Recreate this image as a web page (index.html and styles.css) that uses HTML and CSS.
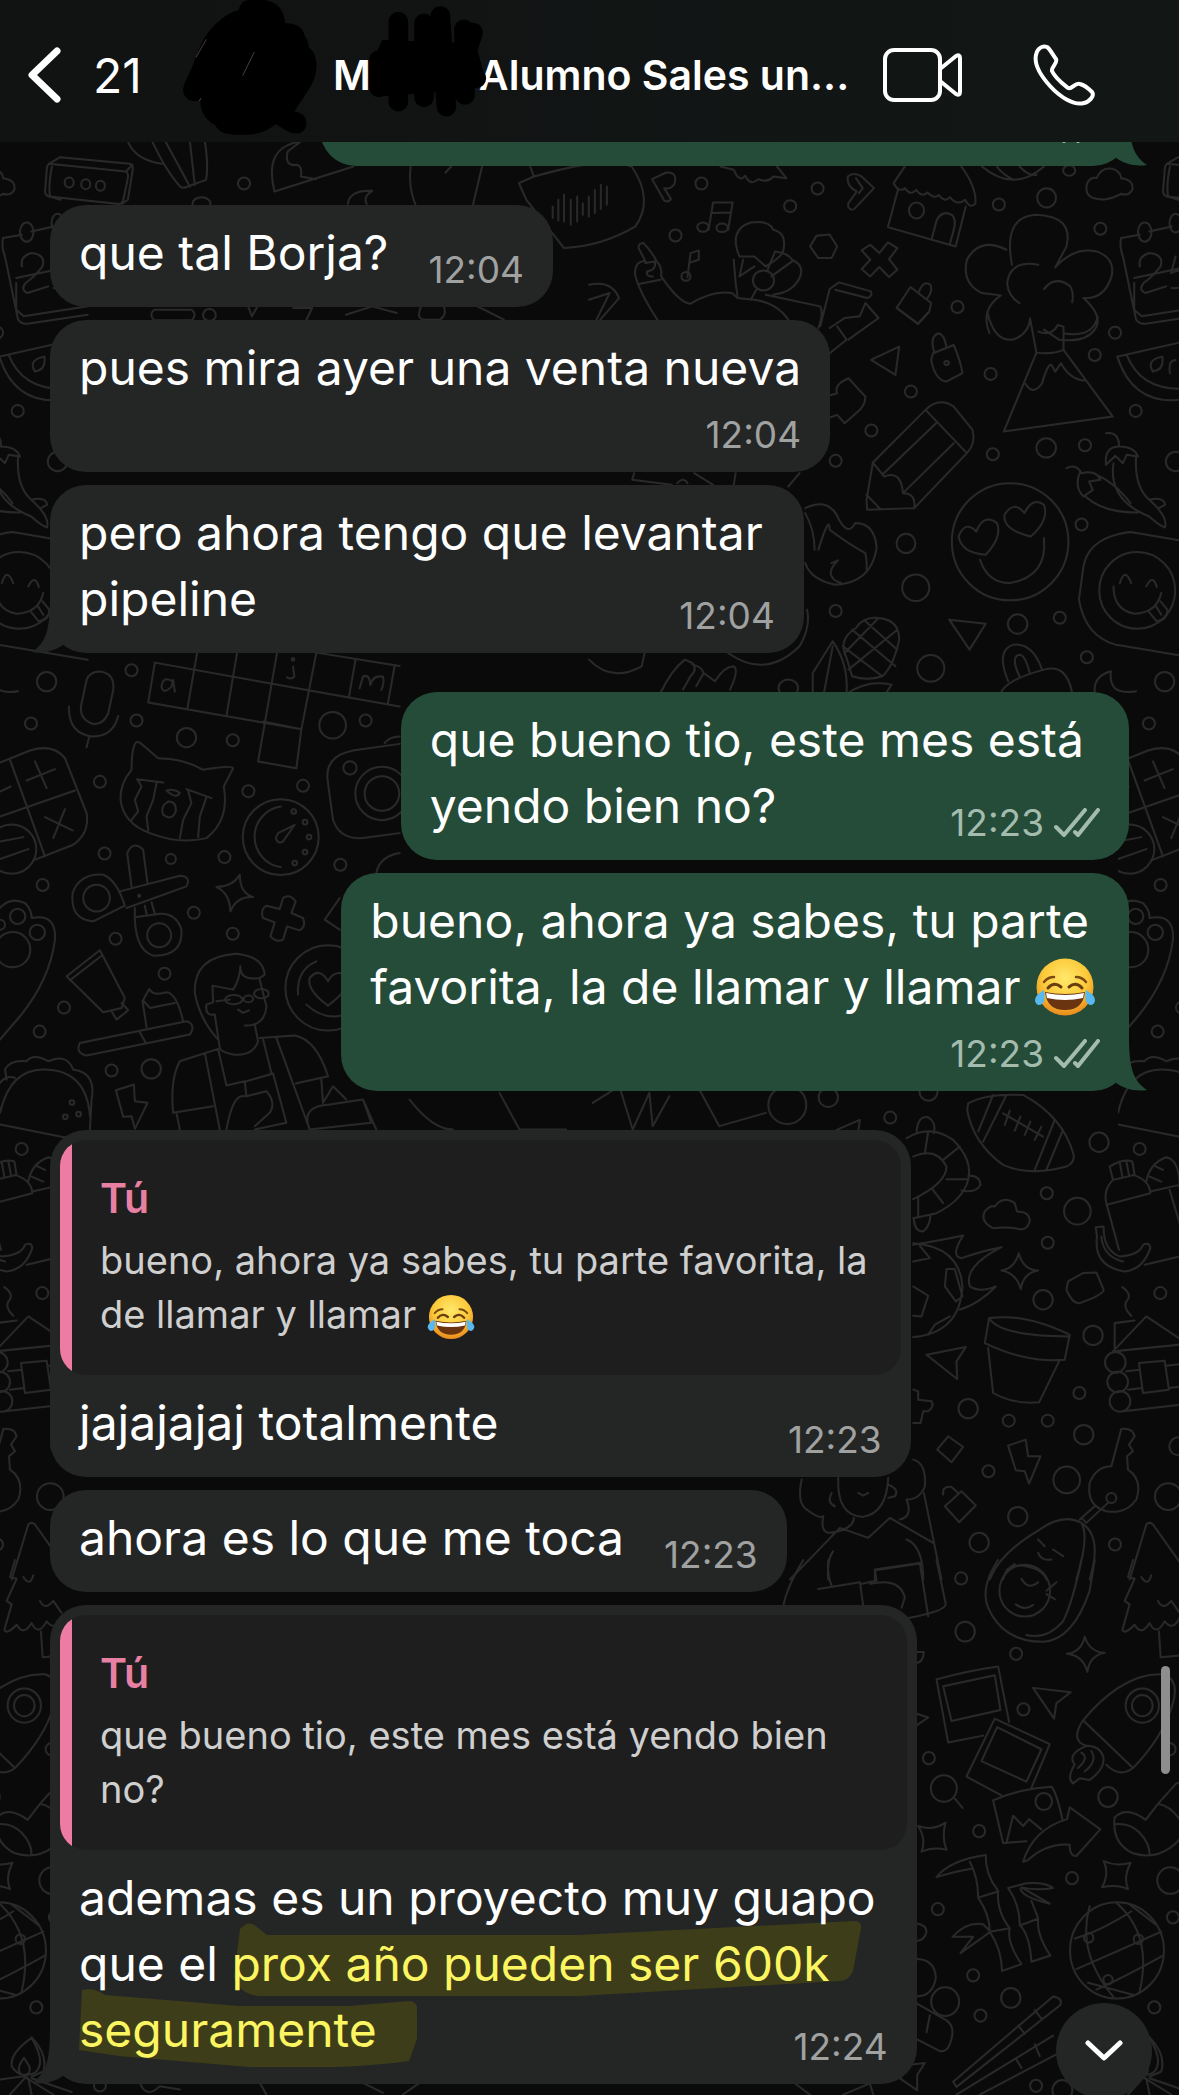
FILE: index.html
```html
<!DOCTYPE html>
<html lang="es">
<head>
<meta charset="utf-8">
<meta name="viewport" content="width=device-width, initial-scale=1">
<title>Chat</title>
<link rel="stylesheet" href="styles.css">
</head>
<body>
<svg class="sprites" aria-hidden="true">
  <defs>
    <radialGradient id="face" cx=".5" cy=".35" r=".65">
      <stop offset="0" stop-color="#ffe86b"/><stop offset=".6" stop-color="#fcc93a"/><stop offset="1" stop-color="#e88a1c"/>
    </radialGradient>
    <symbol id="joy" viewBox="0 0 62 58">
      <circle cx="31" cy="29" r="28.500" fill="url(#face)"/>
      <path d="M10 24Q14 19 20 19M42 19Q48 19 52 24" fill="none" stroke="#7a4a12" stroke-width="2.500" stroke-linecap="round"/>
      <path d="M14 30Q20 23 27 29M35 29Q42 23 48 30" fill="none" stroke="#6b3d0e" stroke-width="3" stroke-linecap="round"/>
      <path d="M11 34Q31 38 51 34Q49 52 31 52Q13 52 11 34Z" fill="#6b3410"/>
      <path d="M12 35Q31 39 50 35L49 40Q31 44 13 40Z" fill="#fff"/>
      <path d="M10 32Q0 38 1 43Q3 49 8 46Q12 43 10 32ZM52 32Q62 38 61 43Q59 49 54 46Q50 43 52 32Z" fill="#58b8f0"/>
    </symbol>
    <symbol id="checks" viewBox="0 0 46 30">
      <path d="M2 19L10 27L31 2M21 24L24 27L44 2" fill="none" stroke="currentColor" stroke-width="4" stroke-linecap="round" stroke-linejoin="round"/>
    </symbol>
    <symbol id="tail" viewBox="0 0 46 54">
      <path d="M18 0C18 30 14 44 0 53C14 55 23 51 31 46L46 22V0Z" fill="currentColor"/>
    </symbol>
  </defs>
</svg>

<header class="topbar">
  <button class="back" type="button" aria-label="Volver, 21 chats sin leer">
    <svg width="33" height="56" viewBox="0 0 33 56" aria-hidden="true"><path d="M29 4L4 28L29 52" fill="none" stroke="currentColor" stroke-width="7" stroke-linecap="round" stroke-linejoin="round"/></svg>
    <span>21</span>
  </button>
  <svg class="avatar" viewBox="38 0 402 426" preserveAspectRatio="none" aria-hidden="true">
    <path d="M205 30C210 5 230-10 285 0C320 8 340 25 345 70C375 68 400 85 402 105C412 120 415 130 415 142C440 160 445 200 430 240C420 265 400 290 372 335C400 335 415 360 405 385C395 405 370 405 345 390L315 372C290 395 260 405 215 404C180 405 145 402 135 375C110 365 88 335 90 300C70 310 40 300 38 270C40 245 65 210 75 175C90 140 100 110 120 90C140 65 170 40 205 30Z"/>
    <path d="M77 172L108 118M217 227L252 156M87 303L92 294" stroke="#6a6058" stroke-width="2"/>
  </svg>
  <h1 class="title"><span>M</span><svg class="title-cover" viewBox="594 12 360 426" aria-hidden="true">
      <path d="M640 120L920 130L948 235L890 270L620 290L600 240L612 180Z"/>
      <path d="M688 65V305M765 70V292M814 48L832 320M885 88L888 285M912 98L895 150M630 180V262M880 235H922" fill="none" stroke="#000" stroke-width="59" stroke-linecap="round"/>
    </svg><span class="title-text">Alumno Sales un...</span></h1>
  <div class="actions">
    <button type="button" aria-label="Videollamada"><svg width="80" height="54" viewBox="0 0 80 54" aria-hidden="true"><g fill="none" stroke="currentColor" stroke-width="4" stroke-linejoin="round"><rect x="2" y="2" width="55" height="50" rx="9"/><path d="M57 21L73 8Q77 6 77 10V44Q77 48 73 46L57 33"/></g></svg></button>
    <button type="button" aria-label="Llamar"><svg width="62" height="62" viewBox="0 0 62 62" aria-hidden="true"><path d="M3 11C4 5 9 1 14 3C17 5 20 11 23 15C25 19 18 23 19 27C22 34 30 40 35 44C39 46 42 38 47 40C51 41 56 45 59 48C62 52 56 58 51 59C41 62 27 53 17 42C8 32 1 20 3 11Z" fill="none" stroke="currentColor" stroke-width="4" stroke-linejoin="round"/></svg></button>
  </div>
</header>

<main class="chat">
  <svg class="wallpaper" aria-hidden="true">
    <defs>
      <g id="doodles">
        <!-- upper left: cassette, wings, fish -->
        <g transform="scale(.376 .333)">
          <path d="M130 492L335 515Q342 520 340 535L328 600Q325 615 310 612L130 590Q118 585 120 570L125 500ZM130 492L160 472L345 492Q355 495 353 510L340 600L325 612M335 515L352 495"/>
          <ellipse cx="184" cy="548" rx="12" ry="15"/><ellipse cx="228" cy="553" rx="12" ry="15"/><ellipse cx="267" cy="558" rx="12" ry="15"/>
          <path d="M340 425Q360 480 430 492M405 425Q440 510 475 555Q485 570 500 560L548 540Q555 500 545 425M440 425L505 560M505 425L518 555"/>
          <path d="M730 575Q700 440 800 425M730 575L940 500M800 425L765 455Q755 500 790 495Q805 500 800 530L840 538M925 612Q930 570 990 573Q965 590 975 612"/>
          <ellipse cx="649" cy="551" rx="16" ry="18"/><ellipse cx="536" cy="612" rx="24" ry="20"/>
          <path d="M1092 500Q1085 560 1105 615M1282 500L1258 615M1185 518L1200 500M1410 500L1420 530L1490 510M1380 550L1420 530Q1600 470 1680 500Q1740 600 1690 680Q1600 740 1500 745L1400 600Z"/>
          <path d="M1470 620V655M1485 600V662M1500 585V665M1518 600V675M1535 590V665M1550 610V645M1566 590V650M1582 570V640M1598 555V628M1614 560V615"/>
          <path d="M410 930H510Q525 945 510 962H410Q395 945 410 930M660 920L670 950L685 920M780 925H830L815 960M920 945L990 920L1055 940M1120 920Q1105 960 1130 960H1170Q1190 945 1180 920M1270 920L1340 960"/>
          <ellipse cx="557" cy="946" rx="17" ry="18"/>
        </g>
        <!-- upper right: music, shop, volcano cloud -->
        <g transform="translate(589) scale(.376 .333)">
          <path d="M168 538L205 518Q235 515 228 550Q220 570 200 565L218 598Q210 610 200 602ZM700 630Q685 625 690 610L712 575Q685 560 688 530Q705 515 725 530L758 565L705 628M710 535L728 565L718 580"/>
          <path d="M318 690L330 608H382L370 690M328 640L378 638M262 832L270 760L292 752V780L270 788"/>
          <ellipse cx="303" cy="682" rx="15" ry="14"/><ellipse cx="354" cy="684" rx="15" ry="13"/><ellipse cx="258" cy="830" rx="12" ry="13"/>
          <path d="M350 500L385 510Q400 550 415 528Q430 560 450 538Q475 550 490 530L525 535L500 500"/>
          <path d="M840 500L810 550Q825 580 840 565Q855 590 870 570Q885 595 900 578Q920 600 930 585Q945 610 960 592Q980 620 1000 600Q1015 630 1028 610Q1030 560 990 500M822 568L795 682L975 740L1002 620M912 715L925 660Q940 630 965 645Q978 660 970 690L960 732"/>
          <ellipse cx="871" cy="632" rx="20" ry="24"/><path d="M1045 500Q1130 580 1210 500M1085 500Q1100 525 1130 540M1145 500Q1170 530 1190 525"/>
          <path d="M1350 597Q1315 590 1325 550Q1335 530 1350 535Q1365 495 1400 510Q1415 520 1415 535Q1450 540 1445 570Q1435 590 1415 582Q1380 605 1350 597Z"/>
          <path d="M1545 500Q1535 560 1540 590L1568 600M605 708L640 704L660 740L645 775H610L588 740ZM748 735L772 760L795 728L820 745L798 778L820 810L798 832L772 802L748 830L725 808L748 780L725 752Z"/>
          <path d="M1125 795Q1100 650 1190 645Q1290 650 1270 740L1240 803Q1290 740 1350 755Q1400 775 1390 830Q1370 900 1315 895Q1370 950 1345 990Q1320 1030 1250 1020L1210 990M1110 750Q1040 710 1005 780Q990 850 1045 880L1095 887Q1040 930 1065 1000M1195 795Q1120 780 1112 850Q1115 890 1145 910M1210 868Q1240 825 1280 860Q1290 880 1285 908"/>
          <path d="M1465 705L1415 715Q1410 740 1420 770L1455 960Q1465 975 1480 972L1640 945M1490 695L1550 680M1450 850V930L1470 950L1640 920M1450 835L1640 790"/>
          <ellipse cx="1478" cy="697" rx="18" ry="29"/><ellipse cx="1560" cy="670" rx="16" ry="28"/>
          <path d="M1465 800Q1460 770 1490 760Q1530 765 1520 800Q1500 830 1475 850Q1460 870 1480 880L1535 860M1560 770L1548 820Q1580 800 1590 830Q1590 870 1550 865"/>
          <path d="M182 960Q130 870 122 820Q125 780 150 785L132 745Q130 730 145 730Q170 760 180 785Q195 800 192 830Q240 910 270 912Q330 870 380 880L395 895L440 900Q500 910 530 960M135 852L190 840M150 790L175 785Q180 810 155 815Q150 830 170 830"/>
          <path d="M400 770Q370 690 430 668Q480 660 490 690Q530 700 515 760Q500 780 470 800L440 770ZM385 780L390 850L395 890M410 780L400 830L440 800M495 755Q530 760 540 780Q580 800 555 845Q535 880 490 885M495 755L475 810M540 785L485 830M430 900L445 870"/>
          <ellipse cx="464" cy="842" rx="28" ry="30"/>
          <path d="M470 885L615 920Q625 940 610 985M640 868L615 980M640 868L665 848L750 875Q755 890 740 895L655 870M735 910L770 955L690 1020M640 985L680 955L720 950L735 910M660 980L685 1020L630 1070"/>
          <path d="M855 862L910 910L905 935L875 972L818 925ZM878 875Q890 840 908 855Q915 875 900 895M0 855Q60 840 80 895L30 960M0 900L55 880L20 960"/>
          <ellipse cx="299" cy="551" rx="16" ry="18"/><ellipse cx="608" cy="566" rx="16" ry="18"/><ellipse cx="535" cy="619" rx="16" ry="18"/><ellipse cx="230" cy="707" rx="16" ry="18"/><ellipse cx="1090" cy="614" rx="16" ry="18"/><ellipse cx="1217" cy="594" rx="25" ry="29"/><ellipse cx="1360" cy="687" rx="16" ry="18"/><ellipse cx="980" cy="922" rx="16" ry="18"/><ellipse cx="1277" cy="512" rx="16" ry="16"/>
        </g>
        <!-- right: volcano, pencil, chillies, smileys, corn -->
        <g transform="translate(589 300) scale(.376 .333)">
          <path d="M1060 40Q1080 130 1130 118Q1170 100 1173 55L1190 158Q1230 165 1262 150V80L1247 75Q1230 110 1195 95M1262 100Q1340 115 1353 50M1190 158L1103 395L1393 350L1262 150M1160 250Q1180 290 1205 250Q1220 190 1230 195L1240 215L1255 190Q1280 240 1320 242"/>
          <path d="M820 25L875 72L905 35M825 140L750 180L815 225ZM915 160L970 135Q990 190 993 220L950 245Q920 240 910 180ZM918 155Q905 110 930 100Q945 105 950 138"/>
          <circle cx="951" cy="189" r="6"/>
          <path d="M630 290L660 280Q650 255 690 235L735 290Q735 320 710 340L680 370L660 345L635 355"/>
          <path d="M755 488L895 330Q930 290 970 320L1020 390Q1030 430 1005 460L865 625L740 630L738 600ZM895 330L1005 460M925 368L780 525M970 430L835 580M755 488L785 530Q830 510 835 580Q870 580 865 625M738 585L775 628"/>
          <path d="M1405 170L1640 110M1405 170Q1450 330 1600 295M1430 165Q1470 280 1600 265M1500 215Q1480 180 1525 170Q1530 210 1500 215M1545 220Q1540 180 1560 180"/>
          <path d="M1375 400Q1410 395 1410 440M1375 495Q1370 440 1410 440Q1450 440 1460 470L1430 465L1420 490L1400 468ZM1395 490Q1380 600 1490 650Q1520 680 1532 683Q1540 650 1490 600Q1450 560 1455 470M1270 505Q1295 490 1310 520Q1350 510 1360 540L1330 545L1340 570L1315 590Q1290 560 1305 520M1320 590Q1370 640 1460 638M1350 525Q1400 550 1440 610M1490 600Q1530 590 1532 615L1515 625"/>
          <ellipse cx="1120" cy="726" rx="155" ry="176"/><path d="M1055 765Q990 760 983 710Q1000 660 1030 695Q1050 640 1085 670Q1100 710 1055 765ZM1175 710Q1100 690 1105 645Q1130 600 1158 640Q1180 590 1210 615Q1225 660 1175 710ZM1040 780Q1060 850 1120 850Q1220 830 1210 715"/>
          <path d="M1640 735L1440 697Q1330 710 1315 800L1303 900Q1320 1010 1400 1035L1640 1080"/><ellipse cx="1458" cy="872" rx="101" ry="115"/><path d="M1412 850Q1425 800 1442 850M1482 860Q1500 820 1510 862M1395 860Q1395 930 1450 942Q1510 940 1522 880M1488 935L1510 965Q1540 960 1538 930L1520 905M1508 920L1522 945"/>
          <path d="M575 625Q640 590 665 660Q690 710 708 670Q760 670 765 745Q750 850 655 855Q590 840 575 790M600 750Q600 690 575 640M610 750Q640 640 640 690Q700 740 735 760Q740 790 738 808M645 790L662 782Q620 830 670 850"/>
          <path d="M685 1075Q660 1020 710 985Q730 950 770 955Q825 960 825 1020Q810 1100 780 1130Q740 1145 700 1130ZM700 990L815 1100M735 965L820 1050M675 1040L780 1130M820 990L690 1110M770 955L680 1060M648 1025L595 1120V1180M648 1025Q690 1090 685 1180M648 1040L625 1180M690 1180Q740 1140 805 1155L790 1180"/>
          <path d="M958 960L1055 972L1012 1050ZM1115 1145Q1080 1050 1130 1035Q1180 1030 1205 1110M1145 1130Q1120 1070 1145 1065Q1160 1065 1172 1120M1095 1180Q1110 1140 1210 1110Q1270 1090 1285 1180M1345 1180Q1340 1130 1388 1115Q1380 1190 1455 1175"/>
          <path d="M190 1180Q220 1110 255 1080L275 1090Q290 1110 270 1130L250 1170M275 1095Q300 1100 305 1120L285 1160M305 1120L335 1145Q360 1100 385 1100Q400 1110 375 1170M0 1080Q60 1150 140 1100L148 1060M370 1060Q470 1140 560 1040Q590 980 580 930M120 520L115 540L220 555M235 550Q250 530 262 550M280 520L330 555M390 520L385 555M560 520L530 560"/>
          <ellipse cx="1399" cy="98" rx="16" ry="18"/><ellipse cx="1345" cy="165" rx="16" ry="18"/><ellipse cx="1068" cy="222" rx="16" ry="18"/><ellipse cx="856" cy="275" rx="16" ry="18"/><ellipse cx="1454" cy="333" rx="16" ry="18"/><ellipse cx="751" cy="392" rx="16" ry="18"/><ellipse cx="656" cy="483" rx="16" ry="18"/><ellipse cx="1074" cy="463" rx="16" ry="18"/><ellipse cx="1216" cy="444" rx="26" ry="29"/><ellipse cx="1319" cy="436" rx="16" ry="18"/><ellipse cx="1310" cy="674" rx="16" ry="18"/><ellipse cx="843" cy="731" rx="25" ry="29"/><ellipse cx="869" cy="864" rx="36" ry="40"/><ellipse cx="656" cy="934" rx="16" ry="18"/><ellipse cx="1140" cy="973" rx="26" ry="29"/><ellipse cx="1252" cy="954" rx="16" ry="18"/><ellipse cx="909" cy="1106" rx="36" ry="40"/><ellipse cx="1324" cy="1073" rx="16" ry="18"/><ellipse cx="530" cy="1165" rx="26" ry="25"/><ellipse cx="1560" cy="485" rx="26" ry="29"/>
        </g>
        <!-- left: crossword, cat, scissors, reader -->
        <g transform="translate(0 620) scale(.333)">
          <path d="M465 128L445 248L905 328L890 445L775 425L832 98M465 128L930 212L1200 260M592 98L563 265M712 98L680 288M950 98L905 328M950 98L1200 138M1068 118L1048 230M1185 138L1165 250M790 305L905 328M520 185Q490 165 485 200Q490 225 515 200L520 180L525 215M880 140L884 170Q875 180 862 172M1080 205L1090 170Q1110 160 1112 195Q1120 165 1150 170Q1155 190 1145 210"/>
          <circle cx="880" cy="118" r="4"/>
          <path d="M300 155Q345 160 340 210L325 280Q310 315 280 312Q240 300 243 260L260 180Q270 155 300 155ZM207 260Q205 340 275 350Q340 350 355 288M268 350L260 382"/>
          <path d="M0 428L90 392Q160 370 195 415L260 580Q270 640 220 675L100 722M30 420L135 710M0 590L225 512M105 425L140 505M80 482L165 448M160 655L195 568M135 592L218 632M0 515L32 500M0 665L70 652M0 718L85 688"/><circle cx="35" cy="688" r="74"/>
          <path d="M410 366Q395 380 395 450Q360 490 362 540Q370 610 450 640Q540 675 620 655Q690 600 672 500L700 445Q695 435 610 450Q550 415 475 415L420 368ZM412 478L490 488M412 478L425 500L405 540L415 575L395 600M470 490L460 540L440 590L445 632M560 508L635 535M565 512L575 550L550 600L540 655M620 532L600 590L595 652M500 512Q520 505 540 518Q530 540 500 512M505 545Q530 545 528 575Q515 605 490 585Q480 560 505 545"/>
          <circle cx="843" cy="652" r="114"/><path d="M843 560A92 92 0 0 0 843 742M885 615L850 665Q835 675 828 655L835 640Z"/><circle cx="882" cy="575" r="7"/><circle cx="916" cy="607" r="7"/><circle cx="928" cy="652" r="7"/><circle cx="916" cy="697" r="7"/><circle cx="885" cy="730" r="7"/>
          <path d="M1200 372L1060 392Q970 410 985 490L1000 600Q1020 660 1090 655L1200 640M1155 370Q1170 350 1200 350M1130 760Q1140 710 1200 700"/><circle cx="1147" cy="521" r="80"/><circle cx="1147" cy="521" r="52"/>
          <path d="M360 815L540 768Q575 770 560 800L380 865M395 800L382 700Q400 660 430 690L443 792M375 858L280 905Q210 900 218 820Q240 760 310 765Q350 780 375 858M405 865Q400 990 460 1008Q550 1010 545 930Q530 880 480 882L410 892M440 882L435 858M465 882L455 848"/><circle cx="290" cy="835" r="40"/><circle cx="478" cy="947" r="36"/><circle cx="418" cy="828" r="3"/>
          <path d="M650 802Q700 800 720 765Q720 820 760 832Q710 830 692 875Q690 820 650 802ZM850 835Q870 820 888 845L875 880L910 895Q920 920 900 932L862 920L850 960Q830 970 812 950L825 908L790 895Q780 870 800 858L840 868Z"/>
          <path d="M200 1070L300 992L375 1135L365 1165L310 1178ZM210 1082L305 1008M365 1150L385 1172L350 1200L335 1175M440 1222L428 1145L448 1108Q460 1130 500 1118Q530 1120 550 1205M432 1145L450 1165L525 1150M240 1270L560 1205Q590 1215 570 1245L260 1308Q225 1300 240 1270M420 1238L438 1270"/>
          <path d="M660 1285L645 1185Q615 1190 620 1155L640 1148L638 1098L700 1110Q720 1080 722 1040Q720 1085 780 1075L795 1065Q790 1010 710 1002Q580 1010 585 1120Q600 1200 655 1260M780 1080L800 1160Q795 1220 735 1218M765 1215L775 1265Q760 1310 700 1305Q660 1295 660 1285M650 1145L690 1140M715 1170L730 1180L748 1172"/><ellipse cx="702" cy="1140" rx="26" ry="14"/><ellipse cx="785" cy="1122" rx="22" ry="14"/><ellipse cx="746" cy="1138" rx="14" ry="10"/>
          <path d="M655 1288L540 1325Q510 1380 520 1480L640 1460M615 1300L660 1530M655 1288L680 1398L735 1385M780 1255L885 1248Q950 1260 985 1370L888 1392M790 1260L815 1360M830 1255L930 1530M530 1480L540 1530M740 1385L820 1362L860 1510L765 1530M735 1385L740 1430L800 1415Q830 1450 810 1480L765 1520M680 1530Q700 1420 735 1430M965 1380L970 1450L1000 1400L1040 1440M930 1530Q900 1460 990 1455L1090 1440L1115 1510L930 1530M1090 1440L1130 1530"/>
          <circle cx="985" cy="1105" r="128"/><path d="M895 1125Q890 1050 950 1025M920 1155Q980 1210 1050 1180M985 1158Q920 1110 930 1075Q960 1040 985 1085Q1005 1045 1050 1070Q1050 1110 985 1158M1020 835L975 900L1020 930"/>
          <path d="M0 865Q30 830 75 850Q95 870 95 895Q170 880 165 960Q150 1080 60 1190L0 1260"/><circle cx="53" cy="890" r="23"/><circle cx="112" cy="938" r="23"/><circle cx="38" cy="990" r="53"/><circle cx="0" cy="915" r="15"/>
          <path d="M15 1350Q30 1320 80 1325Q100 1300 145 1325Q200 1300 220 1350Q290 1360 275 1440L270 1530M15 1350L20 1380M0 1480Q30 1350 130 1350Q260 1350 270 1490M0 1390Q20 1365 45 1375M0 1515L200 1555"/><circle cx="216" cy="1449" r="7"/><circle cx="236" cy="1484" r="7"/><circle cx="196" cy="1492" r="7"/>
          <path d="M348 1412L402 1395L405 1445L443 1450L405 1528L395 1490L370 1492Z"/>
          <circle cx="140" cy="185" r="29"/><circle cx="395" cy="151" r="18"/><circle cx="93" cy="311" r="18"/><circle cx="410" cy="302" r="18"/><circle cx="560" cy="353" r="29"/><circle cx="699" cy="361" r="18"/><circle cx="999" cy="316" r="40"/><circle cx="1098" cy="302" r="18"/><circle cx="1051" cy="444" r="20"/><circle cx="300" cy="486" r="18"/><circle cx="746" cy="514" r="18"/><circle cx="910" cy="498" r="18"/><circle cx="314" cy="701" r="18"/><circle cx="513" cy="718" r="15"/><circle cx="674" cy="712" r="18"/><circle cx="1022" cy="735" r="18"/><circle cx="128" cy="796" r="18"/><circle cx="582" cy="879" r="18"/><circle cx="347" cy="957" r="18"/><circle cx="699" cy="942" r="18"/><circle cx="494" cy="1062" r="18"/><circle cx="192" cy="1164" r="18"/><circle cx="119" cy="1236" r="18"/><circle cx="335" cy="1353" r="18"/><circle cx="454" cy="1348" r="29"/>
          <path d="M1230 1440Q1300 1530 1360 1530M1500 1420L1560 1530H1700M1780 1450L1860 1400L1900 1530L1950 1420L1960 1520L2010 1430M2100 1410L2160 1520L2300 1480"/>
        </g>
        <!-- right: football, lifebuoy, bottle, plant pot, cabin, key -->
        <g transform="translate(780 1060) scale(.333)">
          <path d="M565 130Q620 100 730 105Q850 170 882 285Q885 310 860 320Q750 350 670 315Q580 250 562 150ZM640 105L595 215M680 105L610 245M825 180L765 330M850 210L800 330M670 160L790 230M690 152L675 195M722 170L705 212M752 185L735 225M785 200L765 240"/>
          <path d="M380 235Q450 190 520 240Q580 300 565 360Q550 420 470 460L400 475M400 290Q470 260 500 320Q500 370 400 418M445 215L435 280M540 260L490 300M565 358L500 358M490 430L455 385M415 470V410M410 215Q415 165 445 172Q470 185 462 220M565 348Q600 345 602 375Q590 400 545 392M402 480Q405 515 430 515Q450 500 452 465"/>
          <path d="M640 505Q600 485 615 455Q630 435 645 440Q670 405 705 430L712 455Q750 455 750 485Q740 515 715 507Q680 500 640 505Z"/>
          <path d="M665 632Q705 625 717 580Q730 630 775 632Q730 640 723 688Q710 640 665 632ZM400 555Q490 540 550 527Q510 590 545 595Q600 575 665 562Q550 620 570 680Q600 700 648 680Q600 730 540 750M400 550Q540 560 548 680Q540 820 400 832M400 680L445 708L425 770L400 768M420 558L450 595L400 605M500 628H525L548 710L528 725L495 680ZM510 770L465 795L445 825"/>
          <path d="M865 665L910 640L950 638L972 690Q970 705 900 730Q880 735 860 690ZM1028 682Q1060 705 1040 725Q1030 745 1055 768M440 885L558 862L530 905L532 958Z"/>
          <path d="M628 775Q740 760 870 825L855 900Q740 910 615 850ZM628 775Q660 830 870 830M625 865L640 1000Q700 1035 778 1028L838 905"/>
          <path d="M990 320Q1030 295 1058 305L1065 345L1000 360ZM1020 305L1028 350M1040 305L1048 345M1000 360Q970 390 980 430L1018 570M1060 345Q1110 360 1112 400L980 435M1112 395L1200 375M1100 365Q1110 310 1160 292Q1200 300 1200 380M1125 318L1150 330M1110 350L1145 365M1170 390L1200 490M1095 615L1200 590M948 502L972 500Q970 570 1020 590Q1080 585 1090 555Q1110 545 1112 565Q1090 630 1035 635Q940 620 952 530ZM965 530Q970 590 1030 605"/>
          <path d="M1000 875L1100 770L1250 870M1005 865V790L1065 782M1000 875L1250 850M1078 910L1155 903L1168 990L1090 1000ZM1040 935L1080 930M1160 918L1250 908M1045 990L1085 985M1168 985L1250 975M1030 1055L1250 1030"/><circle cx="1007" cy="908" r="31"/><circle cx="1014" cy="967" r="31"/><circle cx="1021" cy="1025" r="31"/>
          <path d="M400 990L415 995V1020L455 1025Q465 1040 445 1055H430L422 1090H400M505 1130L550 1162L515 1208L472 1170ZM685 1158L738 1140L745 1190H782L748 1272L735 1235L708 1232Z"/>
          <path d="M1025 1108Q1060 1105 1065 1130L1048 1155L1060 1175L1042 1190L1045 1230Q1090 1260 1070 1320Q1040 1365 980 1355Q920 1340 930 1270Q950 1220 995 1220ZM985 1330L920 1390L905 1375M945 1340L900 1380"/><circle cx="995" cy="1315" r="15"/>
          <path d="M495 1340L545 1295L588 1338L538 1388ZM490 1305Q485 1280 515 1282L535 1300M170 210L240 180L235 212"/>
          <path d="M65 1260Q50 1330 80 1350Q120 1380 130 1370Q120 1420 150 1420Q220 1410 222 1375M175 1255Q170 1370 250 1372Q320 1360 325 1255M155 1300Q140 1330 165 1340M325 1275Q360 1290 345 1310L325 1315M400 1200Q440 1210 435 1280Q420 1320 380 1320Q400 1370 360 1380M432 1300L485 1560M180 1405L30 1560M180 1405L265 1435L330 1375L460 1450M145 1560Q140 1500 160 1475M380 1440Q430 1460 430 1560M285 1560V1530L425 1510M235 1300L250 1308L265 1300"/>
          <path d="M630 1560Q660 1480 780 1410Q850 1360 905 1390Q930 1430 890 1560M905 1390Q970 1430 930 1560M775 1440L795 1460M820 1470L850 1490M775 1480Q785 1505 815 1500M670 1560Q680 1510 740 1520Q790 1530 800 1560M1050 1560L1100 1395Q1110 1385 1120 1395L1230 1550"/>
          <circle cx="22" cy="135" r="57"/><circle cx="145" cy="112" r="29"/><circle cx="331" cy="173" r="18"/><circle cx="446" cy="95" r="27"/><circle cx="958" cy="247" r="29"/><circle cx="1080" cy="267" r="18"/><circle cx="801" cy="400" r="18"/><circle cx="893" cy="454" r="40"/><circle cx="804" cy="549" r="18"/><circle cx="790" cy="720" r="29"/><circle cx="1142" cy="700" r="18"/><circle cx="940" cy="827" r="29"/><circle cx="899" cy="1000" r="18"/><circle cx="565" cy="1047" r="29"/><circle cx="687" cy="1083" r="18"/><circle cx="804" cy="1083" r="18"/><circle cx="912" cy="1125" r="29"/><circle cx="626" cy="1235" r="18"/><circle cx="861" cy="1261" r="40"/><circle cx="714" cy="1371" r="29"/><circle cx="598" cy="1449" r="29"/><circle cx="1006" cy="1455" r="18"/><circle cx="1166" cy="1311" r="40"/><circle cx="1196" cy="1160" r="27"/>
        </g>
        <!-- lower right: avocado, photos, rocket, bamboo, globe -->
        <g transform="translate(780 1560) scale(.333 .341)">
          <path d="M655 0Q600 80 625 140Q670 240 790 240Q880 235 930 90L945 0M905 0Q880 120 850 180Q800 235 740 220M680 30L705 12M800 90L830 65M800 100L825 115M725 55Q745 90 775 65M708 130Q735 150 760 132"/><circle cx="735" cy="90" r="76"/>
          <path d="M1060 0L1045 50L1065 55L1035 120L1050 130L1028 205Q1035 220 1065 190Q1085 225 1110 185Q1130 225 1155 180Q1180 210 1200 170M1085 50Q1105 80 1115 45M1135 120Q1150 150 1175 120L1200 155M1138 210L1143 285L1200 280"/>
          <path d="M10 135Q20 80 70 0M145 0Q140 40 155 75M115 85L240 65L250 135M285 30L420 10L445 165M285 30L290 60L245 70M270 70Q360 50 375 110L365 140M470 0L498 130Q495 150 385 170"/>
          <path d="M470 350Q560 325 655 312L688 475M470 350L505 535L610 515M490 370L645 338L662 440L515 472ZM645 465L810 540L755 668M645 465L560 635L665 690M652 490L785 555L740 650L605 590Z"/>
          <path d="M640 705Q720 670 815 665Q830 680 848 760M640 705L670 830L740 825M680 830L700 750L730 780L748 760L785 790M730 885Q760 790 862 760L870 725L962 790L890 868Q870 870 870 835Q800 830 745 880Z"/><circle cx="792" cy="708" r="25"/>
          <path d="M910 470Q1030 330 1150 335Q1200 350 1180 420Q1150 520 1060 610Q1020 640 980 600M910 470Q870 530 920 545M910 470L1060 610M920 545Q860 570 885 600Q860 640 880 655L900 640L930 645Q980 610 970 575Q960 545 920 545M905 565Q930 580 895 610M935 560Q955 590 915 620"/><circle cx="1088" cy="427" r="50"/><circle cx="1088" cy="427" r="31"/>
          <path d="M1135 715L1098 762Q1040 720 1005 755Q995 830 1060 860Q1160 890 1230 780M1135 715L1190 655L1230 650M1005 775Q1050 770 1080 800Q1110 830 1110 865M1135 715Q1170 720 1200 760"/>
          <path d="M862 275Q905 270 915 225Q930 270 975 272Q930 280 923 328Q910 280 862 275ZM972 883Q1010 900 1053 888Q1030 930 1045 965Q1010 950 967 960Q990 920 972 883ZM415 780Q460 795 497 770Q485 815 500 850Q460 840 425 855Q440 820 415 780ZM760 375L873 388L830 420L823 465ZM408 270H432Q430 300 408 303M408 450L445 462L410 485M525 700L548 727"/><circle cx="492" cy="670" r="39"/>
          <path d="M470 930Q510 880 618 865Q615 920 655 970Q650 1030 690 1080Q680 1120 725 1185L667 1205Q665 1140 630 1090Q630 1040 595 990Q595 930 570 885M470 930Q540 910 580 905M595 990L655 972M630 1090L690 1080M518 1105Q560 1060 610 1068L632 1090L542 1153L580 1105ZM685 962L740 948Q800 945 820 962Q770 970 725 960L810 1008Q730 990 722 965M685 962Q720 1010 720 1070Q750 1100 755 1178L812 1160Q770 1100 775 1050L755 1000M720 1072L775 1052"/>
          <circle cx="1012" cy="1145" r="141"/><path d="M885 1110Q960 1090 1055 1030M890 1200L1145 1090M950 1260Q1020 1230 1150 1160M930 1015Q890 1150 1000 1280M1010 1005Q1120 1100 1080 1265M1050 1010L1130 1070M925 1240L1060 1275"/><circle cx="927" cy="1108" r="14"/><circle cx="1076" cy="1112" r="14"/><circle cx="985" cy="1231" r="14"/>
          <path d="M520 1530L820 1280Q850 1285 842 1305L530 1545ZM765 1320L785 1345M715 1365L735 1390M530 1568L820 1395M765 1420L780 1455M710 1465L725 1490M600 1568L830 1450"/>
          <path d="M408 1170Q465 1170 468 1225Q460 1280 408 1280M408 1065Q440 1070 440 1090Q435 1115 408 1118M410 1300L500 1350Q530 1370 510 1420Q500 1445 480 1440L410 1405M450 1335L440 1385M360 1520L390 1480L435 1475L412 1510V1555ZM45 1535L90 1568M190 1568L270 1535L280 1568M1110 1400Q1160 1450 1145 1500L1110 1515M1100 1520L1110 1568M1110 1520L1230 1560"/>
          <circle cx="544" cy="54" r="18"/><circle cx="556" cy="210" r="29"/><circle cx="709" cy="275" r="18"/><circle cx="731" cy="438" r="18"/><circle cx="447" cy="581" r="18"/><circle cx="598" cy="795" r="18"/><circle cx="985" cy="695" r="29"/><circle cx="877" cy="933" r="18"/><circle cx="474" cy="1024" r="18"/><circle cx="1172" cy="940" r="39"/><circle cx="1180" cy="1048" r="18"/><circle cx="580" cy="1218" r="18"/><circle cx="496" cy="1295" r="42"/><circle cx="693" cy="1284" r="29"/><circle cx="602" cy="1336" r="18"/><circle cx="1124" cy="1312" r="18"/><circle cx="769" cy="1542" r="18"/><circle cx="848" cy="1555" r="30"/><circle cx="1170" cy="555" r="18"/>
        </g>
        <!-- lower left: campfire -->
        <g transform="translate(0 1580) scale(.333)">
          <path d="M95 1375Q30 1420 35 1460Q60 1500 105 1480Q140 1450 95 1375M72 1435Q45 1470 65 1485Q95 1490 88 1460ZM0 1500L70 1490L160 1545M80 1490L30 1545M420 1510Q440 1560 480 1520L540 1530M780 1510L800 1545M1090 1510L1150 1540M1210 1545L1260 1510"/><circle cx="300" cy="1518" r="18"/>
        </g>
      </g>
      <pattern id="tile" width="1118" height="1960" patternUnits="userSpaceOnUse">
        <g class="doodle" transform="translate(0 -142)"><use href="#doodles"/><use href="#doodles" x="-1118"/></g>
      </pattern>
    </defs>
    <rect width="100%" height="100%" fill="url(#tile)"/>
  </svg>

  <ol class="messages">
    <li class="msg out clipped last">
      <div class="line"><p class="text"></p><div class="meta"><time>10:02</time><svg class="checks" role="img" aria-label="Entregado"><use href="#checks"/></svg></div></div>
      <svg class="tail" aria-hidden="true"><use href="#tail"/></svg>
    </li>
    <li class="msg">
      <div class="line"><p class="text">que tal Borja?</p><div class="meta"><time>12:04</time></div></div>
    </li>
    <li class="msg">
      <div class="stack"><p class="text">pues mira ayer una venta nueva</p><div class="meta"><time>12:04</time></div></div>
    </li>
    <li class="msg last">
      <div class="overlap"><p class="text">pero ahora tengo que levantar<br>pipeline</p><div class="meta"><time>12:04</time></div></div>
      <svg class="tail" aria-hidden="true"><use href="#tail"/></svg>
    </li>
    <li class="msg out">
      <div class="overlap"><p class="text">que bueno tio, este mes está<br>yendo bien no?</p><div class="meta"><time>12:23</time><svg class="checks" role="img" aria-label="Entregado"><use href="#checks"/></svg></div></div>
    </li>
    <li class="msg out last">
      <div class="stack"><p class="text">bueno, ahora ya sabes, tu parte<br>favorita, la de llamar y llamar <svg class="emoji" role="img" aria-label="😂"><use href="#joy"/></svg></p><div class="meta"><time>12:23</time><svg class="checks" role="img" aria-label="Entregado"><use href="#checks"/></svg></div></div>
      <svg class="tail" aria-hidden="true"><use href="#tail"/></svg>
    </li>
    <li class="msg">
      <blockquote class="quote"><cite>Tú</cite><p>bueno, ahora ya sabes, tu parte favorita, la<br>de llamar y llamar <svg class="emoji" role="img" aria-label="😂"><use href="#joy"/></svg></p></blockquote>
      <div class="line"><p class="text">jajajajaj totalmente</p><div class="meta"><time>12:23</time></div></div>
    </li>
    <li class="msg">
      <div class="line"><p class="text">ahora es lo que me toca</p><div class="meta"><time>12:23</time></div></div>
    </li>
    <li class="msg last">
      <blockquote class="quote"><cite>Tú</cite><p>que bueno tio, este mes está yendo bien<br>no?</p></blockquote>
      <div class="overlap"><p class="text">ademas es un proyecto muy guapo<br>que el <mark>prox año pueden ser 600k<br>seguramente</mark><svg class="marker" viewBox="0 0 800 202" aria-hidden="true"><path d="M161 64Q170 54 178 62L188 70H500L775 56Q783 56 782 63L774 106Q770 116 760 116L500 131H180Q160 129 155 112ZM3 125Q15 122 26 130L160 141H270L330 136Q338 136 338 144V174L330 196Q300 200 260 202H170L40 191L0 185Z"/></svg></p><div class="meta"><time>12:24</time></div></div>
      <svg class="tail" aria-hidden="true"><use href="#tail"/></svg>
    </li>
  </ol>
  <div class="scrollbar" aria-hidden="true"></div>
  <button class="to-end" type="button" aria-label="Ir al final">
    <svg width="38" height="22" viewBox="0 0 38 22" aria-hidden="true"><path d="M3 3L19 18L35 3" fill="none" stroke="currentColor" stroke-width="5" stroke-linecap="round" stroke-linejoin="round"/></svg>
  </button>
</main>
</body>
</html>
```
FILE: styles.css
```css
* { box-sizing: border-box; }

body {
  margin: 0;
  min-height: 100vh;
  display: flex;
  flex-direction: column;
  background: #0a0a0a;
  color: #fff;
  font-family: Inter, "Liberation Sans", sans-serif;
}

p, h1, ol, blockquote { margin: 0; padding: 0; }
ol { list-style: none; }

button {
  padding: 0;
  border: 0;
  background: none;
  color: inherit;
  font: inherit;
  display: flex;
  align-items: center;
}

.sprites { position: absolute; width: 0; height: 0; }

/* Top bar */
.topbar {
  height: 142px;
  padding: 8px 84px 0 28px;
  display: flex;
  align-items: center;
  background: linear-gradient(90deg, #111212, #121716);
}
.back { gap: 32px; width: 155px; font-size: 48px; }
.avatar {
  flex: none;
  width: 134px;
  align-self: stretch;
  margin: -8px 16px 0 0;
  height: 142px;
}
.title {
  flex: 1;
  min-width: 0;
  height: 134px;
  display: flex;
  align-items: center;
  font-size: 41px;
  font-weight: 600;
  white-space: nowrap;
}
.title-cover {
  flex: none;
  position: relative;
  z-index: 1;
  width: 120px;
  height: 142px;
  margin: 0 -8px 0 -4px;
}
.actions { display: flex; align-items: center; gap: 70px; }

/* Conversation */
.chat {
  position: relative;
  flex: 1;
  overflow: hidden;
}
.wallpaper {
  position: absolute;
  inset: 0;
  width: 100%;
  height: 100%;
}
.doodle {
  fill: none;
  stroke: #292929;
  stroke-width: 2px;
  stroke-linejoin: round;
  stroke-linecap: round;
}
#doodles path, #doodles circle, #doodles ellipse { vector-effect: non-scaling-stroke; }

.messages {
  position: relative;
  display: flex;
  flex-direction: column;
  align-items: flex-start;
  gap: 13px;
  padding: 0 50px 12px;
}
.msg {
  position: relative;
  border-radius: 36px;
  background: #242626;
  color: #242626;
}
.msg.last:not(:last-child) { margin-bottom: 26px; }
.msg.out {
  align-self: flex-end;
  background: #254b39;
  color: #254b39;
}
.clipped { margin-top: -78px; width: 75%; }

.tail {
  position: absolute;
  left: -18px;
  bottom: 0;
  width: 46px;
  height: 54px;
}
.out .tail { left: auto; right: -18px; transform: scaleX(-1); }

.line, .stack, .overlap {
  display: grid;
  padding: 15px 29px 21px;
}
.line { grid-template-columns: 1fr auto; column-gap: 40px; min-height: 102px; }
.overlap .text, .overlap .meta { grid-area: 1 / 1; }
.overlap .text { padding-right: 12px; }
.out .overlap .text { padding-right: 16px; }
.out .stack .text { padding-right: 4px; }
.stack .meta { margin-top: 12px; }

.text {
  position: relative;
  isolation: isolate;
  color: #fff;
  font-size: 48px;
  line-height: 66px;
  white-space: nowrap;
}
.meta {
  align-self: end;
  justify-self: end;
  display: flex;
  align-items: center;
  gap: 10px;
  margin-bottom: -6px;
  color: #a0a1a1;
  font-size: 37px;
  line-height: 44px;
}
.out .meta { color: #a3bcae; }
.checks { width: 46px; height: 30px; }
.emoji { width: 62px; height: 58px; vertical-align: 0; margin: -12px 0; }

.quote {
  margin: 0 10px;
  height: 235px;
  padding: 31px 33px 34px 40px;
  border-radius: 26px;
  background: linear-gradient(90deg, #ee7ba4 12px, #1e1e1e 12px);
  color: #cfcfcf;
  font-size: 38px;
  line-height: 54px;
  white-space: nowrap;
}
.msg:has(.quote) { padding-top: 10px; }
.quote cite {
  display: block;
  margin-bottom: 8px;
  color: #e880a3;
  font-size: 41px;
  font-style: normal;
  font-weight: 600;
}
.quote .emoji { width: 48px; height: 46px; }

mark { background: none; color: #fcf562; }
.marker {
  position: absolute;
  z-index: -1;
  left: 0;
  top: 0;
  width: 800px;
  height: 202px;
  fill: #3e3d19;
}

.scrollbar {
  position: absolute;
  right: 9px;
  top: 78%;
  width: 9px;
  height: 108px;
  border-radius: 5px;
  background: #8e8e8e;
}
.to-end {
  position: absolute;
  right: 27px;
  bottom: -3px;
  width: 96px;
  height: 96px;
  justify-content: center;
  border-radius: 50%;
  background: #242626;
}
```
